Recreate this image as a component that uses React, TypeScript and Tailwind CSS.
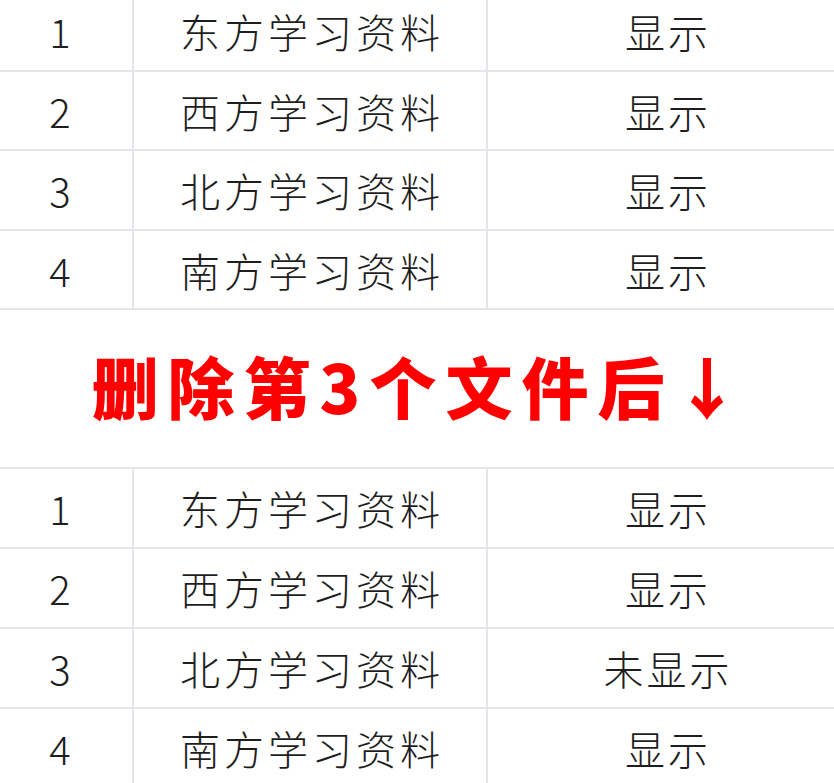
const before = [
  { no: 1, name: '东方学习资料', status: '显示' },
  { no: 2, name: '西方学习资料', status: '显示' },
  { no: 3, name: '北方学习资料', status: '显示' },
  { no: 4, name: '南方学习资料', status: '显示' },
];

const after = [
  { no: 1, name: '东方学习资料', status: '显示' },
  { no: 2, name: '西方学习资料', status: '显示' },
  { no: 3, name: '北方学习资料', status: '未显示' },
  { no: 4, name: '南方学习资料', status: '显示' },
];

type Row = { no: number; name: string; status: string };

function FileTable({ rows, heights, topBorder }: { rows: Row[]; heights: string[]; topBorder?: boolean }) {
  return (
    <div className={`ml-[-12px] w-[857px] ${topBorder ? 'border-t-2 border-[#e5e6ea]' : ''}`}>
      {rows.map((row, i) => (
        <div key={row.no} className={`flex ${heights[i]} border-b-2 border-[#e5e6ea] text-[40px] font-light text-[#1e1e1e] leading-none`}>
          <div className="w-[146px] shrink-0 flex items-center justify-center border-r-2 border-[#e5e6ea]">
            {row.no}
          </div>
          <div className="w-[354px] shrink-0 flex items-center justify-center border-r-2 border-[#e5e6ea] tracking-[4px] pl-[4px]">
            {row.name}
          </div>
          <div className="flex-1 flex items-center justify-center tracking-[3px] pl-[3px]">
            {row.status}
          </div>
        </div>
      ))}
    </div>
  );
}

export default function App() {
  return (
    <div
      className="w-[834px] h-[783px] overflow-hidden bg-white"
      style={{ fontFamily: '"Noto Sans CJK SC", "Noto Sans", sans-serif' }}
    >
      {/* 删除前 */}
      <div className="-mt-[8px]">
        <FileTable rows={before} heights={['h-[80px]', 'h-[79px]', 'h-[80px]', 'h-[79px]']} />
      </div>

      {/* 提示文字 */}
      <div className="h-[157px] flex items-center justify-center pb-[8px]">
        <span className="text-[67px] font-black text-[#ff0000] tracking-[9px] leading-none pl-[9px] -ml-[2px]">
          删除第3个文件后↓
        </span>
      </div>

      {/* 删除后 */}
      <FileTable rows={after} heights={['h-[80px]', 'h-[80px]', 'h-[80px]', 'h-[80px]']} topBorder />
    </div>
  );
}
